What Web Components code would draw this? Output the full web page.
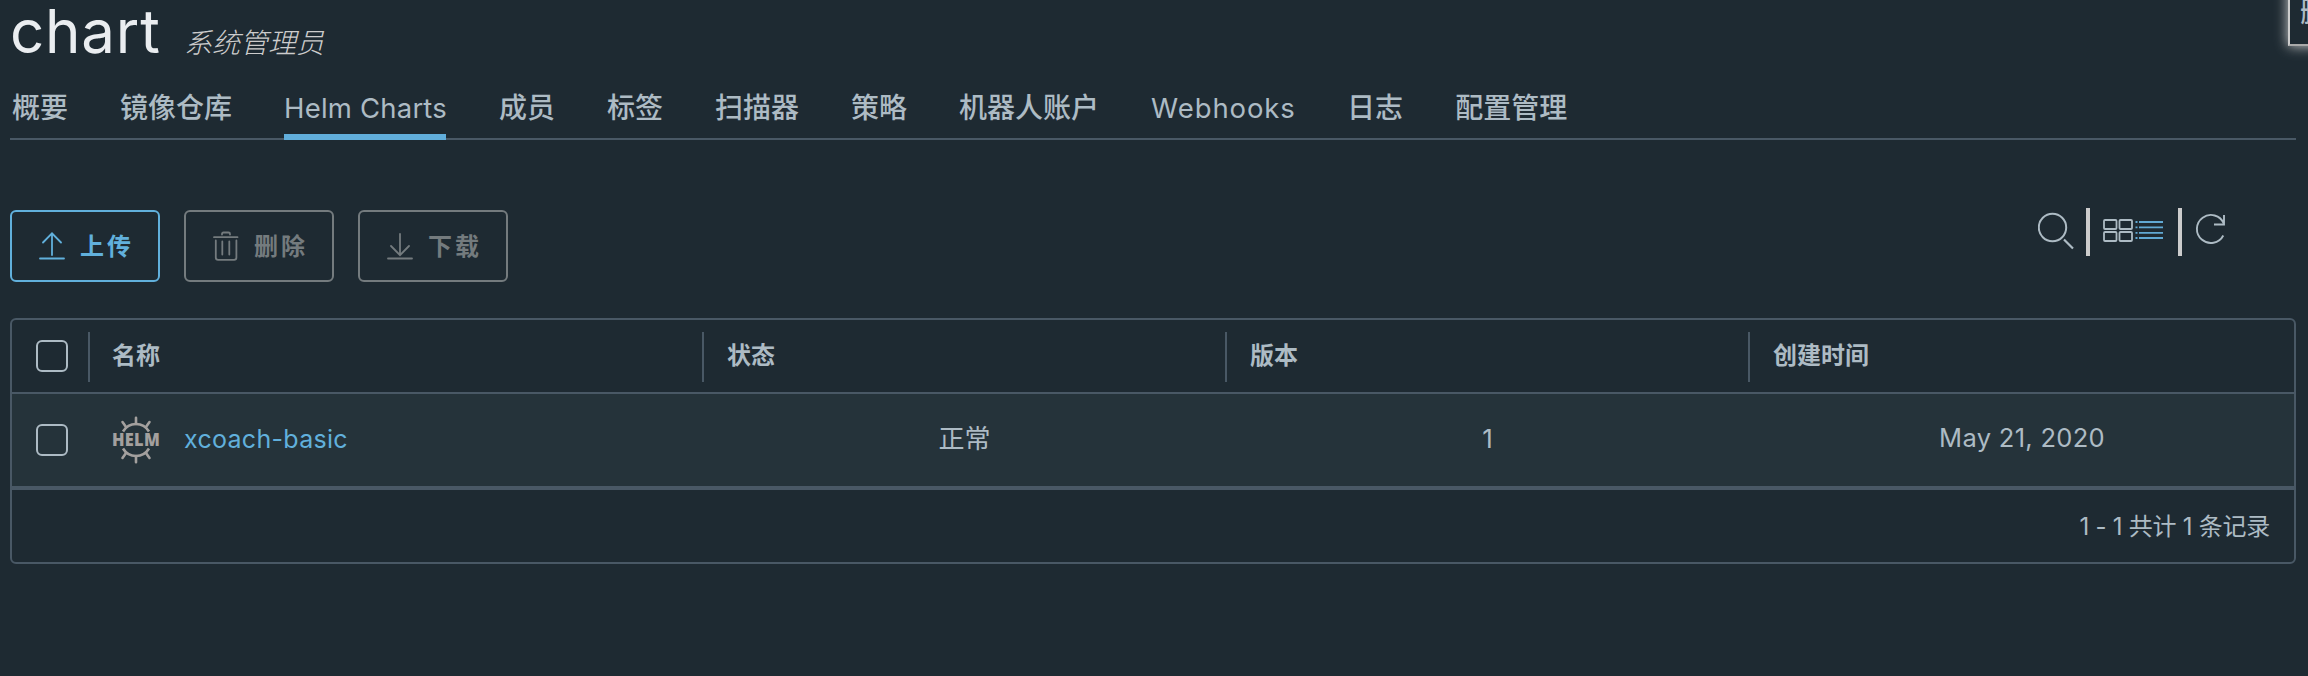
<!DOCTYPE html>
<html lang="zh-CN">
<head>
<meta charset="utf-8">
<title>chart</title>
<style>
  html, body { margin: 0; height: 100%; background: #1e2a32; overflow: hidden; }
  body { font-family: Inter, "Noto Sans CJK SC", sans-serif; color: #adbbc4; }
</style>
</head>
<body>
<project-page></project-page>
<script>
const define = (name, html) => customElements.define(name, class extends HTMLElement {
  constructor() {
    super();
    const t = document.createElement('template');
    t.innerHTML = html;
    this.attachShadow({ mode: 'open' }).append(t.content.cloneNode(true));
  }
});

define('page-title', `
<style>
  :host { display: flex; align-items: baseline; height: 76px; box-sizing: border-box; white-space: nowrap; }
  h1 { margin: 0; font-size: 60px; line-height: 63px; font-weight: 400; color: #eaedf0; width: 174px; letter-spacing: .8px; }
  em { font-size: 28px; font-weight: 300; color: #ccc; line-height: 40px; }
</style>
<h1><slot></slot></h1><em><slot name="role"></slot></em>`);

define('nav-tabs', `
<style>
  :host { display: flex; gap: 52px; height: 64px; box-sizing: border-box; padding-left: 2px; box-shadow: inset 0 -2px #495865; }
</style>
<slot></slot>`);

define('nav-tab', `
<style>
  :host { display: block; box-sizing: border-box; height: 64px; line-height: 64px; font-size: 28px; white-space: nowrap; font-weight: 500; }
  :host([active]) { box-shadow: inset 0 -6px #61aedb; margin-right: 1px; }
  :host([latin]) { font-size: 27.5px; font-weight: 400; }
</style>
<slot></slot>`);

define('action-button', `
<style>
  :host { display: flex; align-items: center; box-sizing: border-box; width: 150px; height: 72px; border: 2px solid #747b7e; border-radius: 6px; color: #747b7e; font-size: 24px; font-weight: 700; letter-spacing: 3px; padding-left: 22px; white-space: nowrap; }
  :host([primary]) { color: #61b0dc; border-color: #61b0dc; }
  span { margin-left: 10px; padding-top: 2px; line-height: 40px; }
  ::slotted(svg) { display: block; flex: none; }
</style>
<slot name="icon"></slot><span><slot></slot></span>`);

define('view-tools', `
<style>
  :host { display: flex; align-items: center; height: 48px; }
  svg { display: block; flex: none; fill: none; stroke: #adbbc4; stroke-width: 2; }
  i { width: 4px; height: 48px; background: #ccc; }
</style>
<svg width="48" height="48" viewBox="0 0 48 48"><circle cx="14.5" cy="19.5" r="13.7"/><path d="M26 31.5l9 9" stroke-width="2.2"/></svg>
<i></i>
<svg width="88" height="48" viewBox="0 0 88 48"><g stroke-width="1.8"><rect x="14" y="12" width="12.5" height="9" rx="1"/><rect x="29.5" y="12" width="12.5" height="9" rx="1"/><rect x="14" y="24" width="12.5" height="9" rx="1"/><rect x="29.5" y="24" width="12.5" height="9" rx="1"/></g><path stroke="#61a9d4" stroke-width="1.8" d="M45.5 14h2M49 14h24M45.5 19.4h2M49 19.4h24M45.5 24.8h2M49 24.8h24M45.5 30h2M49 30h24"/></svg>
<i></i>
<svg width="114" height="48" viewBox="0 0 114 48"><path stroke-width="1.9" d="M41.8 15.5A14 14 0 1 0 41.3 27.5M42 7v9.5H32"/></svg>`);

define('check-box', `
<style>:host { display: block; box-sizing: border-box; width: 32px; height: 32px; border: 2px solid #adbbc4; border-radius: 6px; }</style>`);

define('helm-logo', `
<style>:host { display: block; width: 48px; height: 48px; } svg { display: block; overflow: visible; }</style>
<svg width="48" height="48" viewBox="0 0 48 48" fill="none" stroke="#a3a09e" stroke-width="2.6" stroke-linecap="round">
<path stroke-linecap="butt" d="M11 15.500C17 5.500 31 5.500 37 15.500M11 32.500C17 42.500 31 42.500 37 32.500"/>
<path d="M24 8V1.700M14.200 11.200L10.500 6M33.800 11.200L37.500 6M24 40v6.300M14.200 36.800L10.500 42M33.800 36.800L37.500 42"/>
<text x="24" y="30" text-anchor="middle" textLength="48" lengthAdjust="spacingAndGlyphs" font-family="Open Sans, sans-serif" font-weight="800" font-size="17.500" fill="#a3a09e" stroke="none">HELM</text></svg>`);

define('data-grid', `
<style>
  :host { display: block; box-sizing: border-box; border: 2px solid #495865; border-radius: 6px; overflow: hidden; }
</style>
<slot></slot>`);

define('grid-row', `
<style>
  :host { display: grid; box-sizing: border-box; grid-template-columns: 76px 614px 523px 523px 1fr; height: 96px; background: #25333a; border-bottom: 4px solid #495865; font-size: 26px; }
  :host([head]) { height: 74px; background: none; border-bottom-width: 2px; font-size: 24px; font-weight: 700; }
  :host([head]) ::slotted(grid-cell) { margin: 12px 0 10px; border-left: 2px solid #495865; padding-left: 23px; justify-content: flex-start; line-height: 48px; align-items: flex-start; }
  :host([head]) ::slotted(grid-cell:nth-child(2)) { padding-left: 22px; }
  ::slotted(check-box) { margin: 30px 0 0 24px; }
  :host([head]) ::slotted(check-box) { margin-top: 20px; }
</style>
<slot></slot>`);

define('grid-cell', `
<style>
  :host { display: flex; align-items: center; justify-content: center; white-space: nowrap; line-height: 46px; padding: 0 0 2px 2px; }
  :host([name]) { justify-content: flex-start; padding: 0 0 0 24px; gap: 24px; color: #61b0dc; font-size: 25px; letter-spacing: .3px; }
  ::slotted(span) { margin-top: -2px; }
</style>
<slot></slot>`);

define('grid-footer', `
<style>:host { display: flex; height: 68px; align-items: center; justify-content: flex-end; padding-right: 24px; font-size: 24px; letter-spacing: -.25px; white-space: nowrap; }</style>
<slot></slot>`);

define('event-drawer', `
<style>
  :host { position: absolute; top: -60px; left: 2288px; width: 60px; height: 106px; box-sizing: border-box; border: 2px solid #ccc; border-bottom-color: #a9a9a9; background: #1e2a32; box-shadow: 0 0 12px #ccc; padding: 56px 0 0 10px; font-size: 28px; font-weight: 500; line-height: 28px; white-space: nowrap; }
</style>
<slot></slot>`);

define('project-page', `
<style>
  :host { display: block; box-sizing: border-box; width: 2308px; height: 676px; padding: 0 12px 0 10px; overflow: hidden; position: relative; }
  .bar { display: flex; justify-content: space-between; align-items: flex-start; margin: 70px 0 36px; height: 72px; }
  .actions { display: flex; gap: 24px; }
  view-tools { margin-top: -2px; }
  data-grid { width: 2286px; height: 246px; }
  action-button svg { fill: none; stroke: currentColor; stroke-width: 1.8; stroke-linecap: round; }
</style>
<page-title>chart<span slot="role">系统管理员</span></page-title>
<nav-tabs>
  <nav-tab>概要</nav-tab><nav-tab>镜像仓库</nav-tab><nav-tab active latin style="width:162px;letter-spacing:.2px">Helm Charts</nav-tab><nav-tab>成员</nav-tab><nav-tab>标签</nav-tab><nav-tab>扫描器</nav-tab><nav-tab>策略</nav-tab><nav-tab>机器人账户</nav-tab><nav-tab latin style="width:144px;letter-spacing:.9px">Webhooks</nav-tab><nav-tab>日志</nav-tab><nav-tab>配置管理</nav-tab>
</nav-tabs>
<div class="bar">
  <div class="actions">
    <action-button primary><svg slot="icon" width="36" height="36" viewBox="0 0 36 36"><path d="M6 30.500h24M18 27V5.500M9 14.500L18 5.300 27 14.500"/></svg>上传</action-button>
    <action-button><svg slot="icon" width="36" height="36" viewBox="0 0 36 36"><path d="M6 9.200h23.500M7.800 12.500v17q0 2.300 2.300 2.300h16q2.300 0 2.300-2.300v-17M14.300 13.500v13M21.300 13.500v13M14 6.500V6q0-1.500 1.500-1.500h5Q22 4.500 22 6v.5"/></svg>删除</action-button>
    <action-button><svg slot="icon" width="36" height="36" viewBox="0 0 36 36"><path d="M6 30.500h24M18 6v21M9 18L18 27.200 27 18"/></svg>下载</action-button>
  </div>
  <view-tools></view-tools>
</div>
<data-grid>
  <grid-row head><check-box></check-box><grid-cell>名称</grid-cell><grid-cell>状态</grid-cell><grid-cell>版本</grid-cell><grid-cell>创建时间</grid-cell></grid-row>
  <grid-row><check-box></check-box><grid-cell name><helm-logo></helm-logo><span>xcoach-basic</span></grid-cell><grid-cell>正常</grid-cell><grid-cell>1</grid-cell><grid-cell><span style="font-size:25.500px;letter-spacing:.3px">May 21, 2020</span></grid-cell></grid-row>
  <grid-footer>1 - 1 共计 1 条记录</grid-footer>
</data-grid>
<event-drawer>删</event-drawer>`);
</script>
</body>
</html>
